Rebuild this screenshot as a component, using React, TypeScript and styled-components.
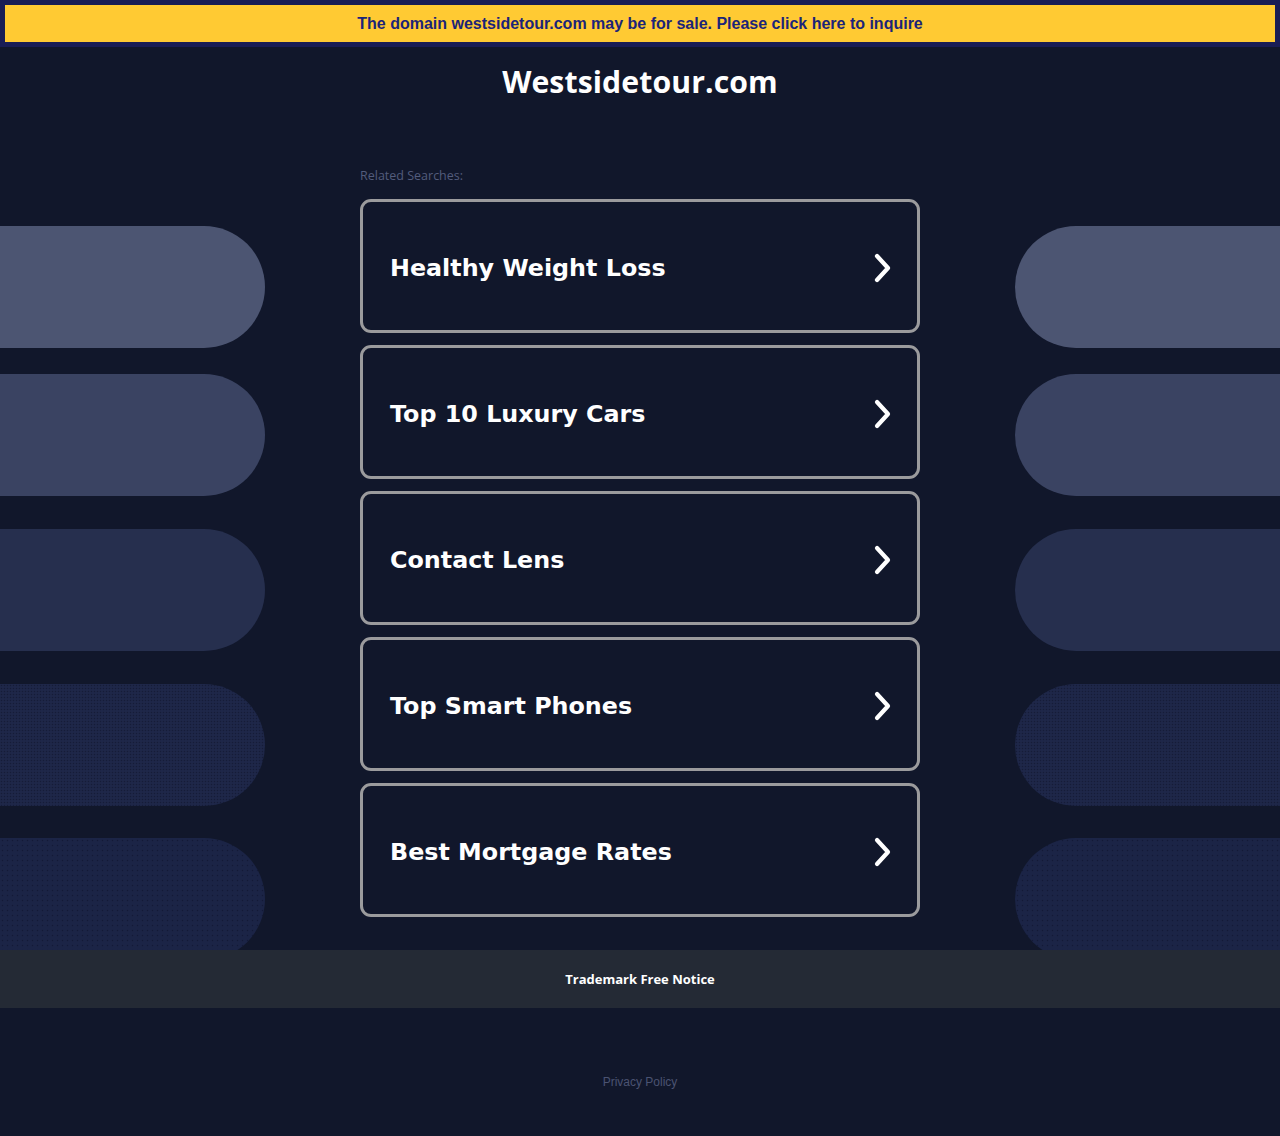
import React from "react";
import styled, { createGlobalStyle, css } from "styled-components";

const GlobalStyle = createGlobalStyle`
  html, body {
    margin: 0;
    padding: 0;
    background: #11172b;
  }
  * { box-sizing: border-box; }
`;

const Page = styled.div`
  min-height: 1136px;
  background: #11172b;
  display: flex;
  flex-direction: column;
`;

const BannerWrap = styled.div`
  background: #191d55;
  padding: 5px;
`;

const Banner = styled.a`
  display: flex;
  align-items: center;
  justify-content: center;
  height: 37px;
  background: #ffca33;
  color: #1b2479;
  font-family: "Liberation Sans", Arial, sans-serif;
  font-weight: 700;
  font-size: 16px;
  text-decoration: none;
`;

const Main = styled.div`
  display: grid;
  grid-template-columns: 265px 1fr 265px;
  overflow: hidden;
`;

const Side = styled.div`
  display: flex;
  flex-direction: column;
  padding-top: 179px;
  height: 903px;
  overflow: hidden;
`;

type PillProps = { $tone: string; $mt: number; $side: "left" | "right"; $dots?: number };

const Pill = styled.div<PillProps>`
  flex: none;
  height: 122px;
  margin-top: ${(p) => p.$mt}px;
  background-color: ${(p) => p.$tone};
  border-radius: ${(p) => (p.$side === "left" ? "0 61px 61px 0" : "61px 0 0 61px")};
  ${(p) =>
    p.$dots &&
    css`
      background-image: radial-gradient(rgba(8, 12, 30, 0.4) 0.6px, transparent 1.1px);
      background-size: ${p.$dots}px ${p.$dots}px;
    `}
`;

const Center = styled.div`
  display: flex;
  flex-direction: column;
  align-items: center;
  padding: 17px 0 32px;
`;

const Title = styled.h1`
  margin: 0;
  height: 38px;
  line-height: 36px;
  color: #ffffff;
  font-family: "Open Sans", sans-serif;
  font-weight: 700;
  font-size: 30.2px;
  letter-spacing: 0.1px;
`;

const Column = styled.div`
  width: 560px;
  display: flex;
  flex-direction: column;
  margin-top: 65px;
`;

const Related = styled.div`
  height: 16px;
  line-height: 18px;
  font-family: "Open Sans", sans-serif;
  font-size: 12.5px;
  color: #535c7c;
  margin-bottom: 16px;
`;

const CardList = styled.div`
  display: flex;
  flex-direction: column;
  gap: 12px;
`;

const Card = styled.a`
  flex: none;
  display: flex;
  align-items: center;
  justify-content: space-between;
  height: 134px;
  border: 3px solid #9b9b9d;
  border-radius: 11px;
  padding: 4px 23px 0 27px;
  color: #ffffff;
  text-decoration: none;
  font-family: "DejaVu Sans", Verdana, sans-serif;
  font-weight: 700;
  font-size: 23.8px;
`;

const Chevron = () => (
  <svg width="22" height="32" viewBox="0 0 22 32" aria-hidden="true">
    <polyline
      points="5,4 16,16 5,28"
      fill="none"
      stroke="#ffffff"
      strokeWidth="4.2"
      strokeLinecap="round"
      strokeLinejoin="round"
    />
  </svg>
);

const FooterBar = styled.div`
  height: 58px;
  background: #242a35;
  display: flex;
  align-items: center;
  justify-content: center;
  color: #ffffff;
  font-family: "Open Sans", sans-serif;
  font-weight: 700;
  font-size: 13px;
`;

const Bottom = styled.div`
  display: flex;
  justify-content: center;
  padding-top: 67px;
`;

const Privacy = styled.a`
  font-family: "Liberation Sans", Arial, sans-serif;
  font-size: 12px;
  color: #4b5372;
  text-decoration: none;
`;

const pills: { tone: string; mt: number; dots?: number }[] = [
  { tone: "#4c5572", mt: 0 },
  { tone: "#3a4362", mt: 26 },
  { tone: "#262f4e", mt: 33 },
  { tone: "#1e2749", mt: 33, dots: 3 },
  { tone: "#1b2446", mt: 32, dots: 5 },
];

const searches = [
  "Healthy Weight Loss",
  "Top 10 Luxury Cars",
  "Contact Lens",
  "Top Smart Phones",
  "Best Mortgage Rates",
];

export default function App() {
  return (
    <Page>
      <GlobalStyle />
      <BannerWrap>
        <Banner href="#">The domain westsidetour.com may be for sale. Please click here to inquire</Banner>
      </BannerWrap>
      <Main>
        <Side>
          {pills.map((p, i) => (
            <Pill key={i} $tone={p.tone} $mt={p.mt} $dots={p.dots} $side="left" />
          ))}
        </Side>
        <Center>
          <Title>Westsidetour.com</Title>
          <Column>
            <Related>Related Searches:</Related>
            <CardList>
              {searches.map((s) => (
                <Card key={s} href="#">
                  <span>{s}</span>
                  <Chevron />
                </Card>
              ))}
            </CardList>
          </Column>
        </Center>
        <Side>
          {pills.map((p, i) => (
            <Pill key={i} $tone={p.tone} $mt={p.mt} $dots={p.dots} $side="right" />
          ))}
        </Side>
      </Main>
      <FooterBar>Trademark Free Notice</FooterBar>
      <Bottom>
        <Privacy href="#">Privacy Policy</Privacy>
      </Bottom>
    </Page>
  );
}
